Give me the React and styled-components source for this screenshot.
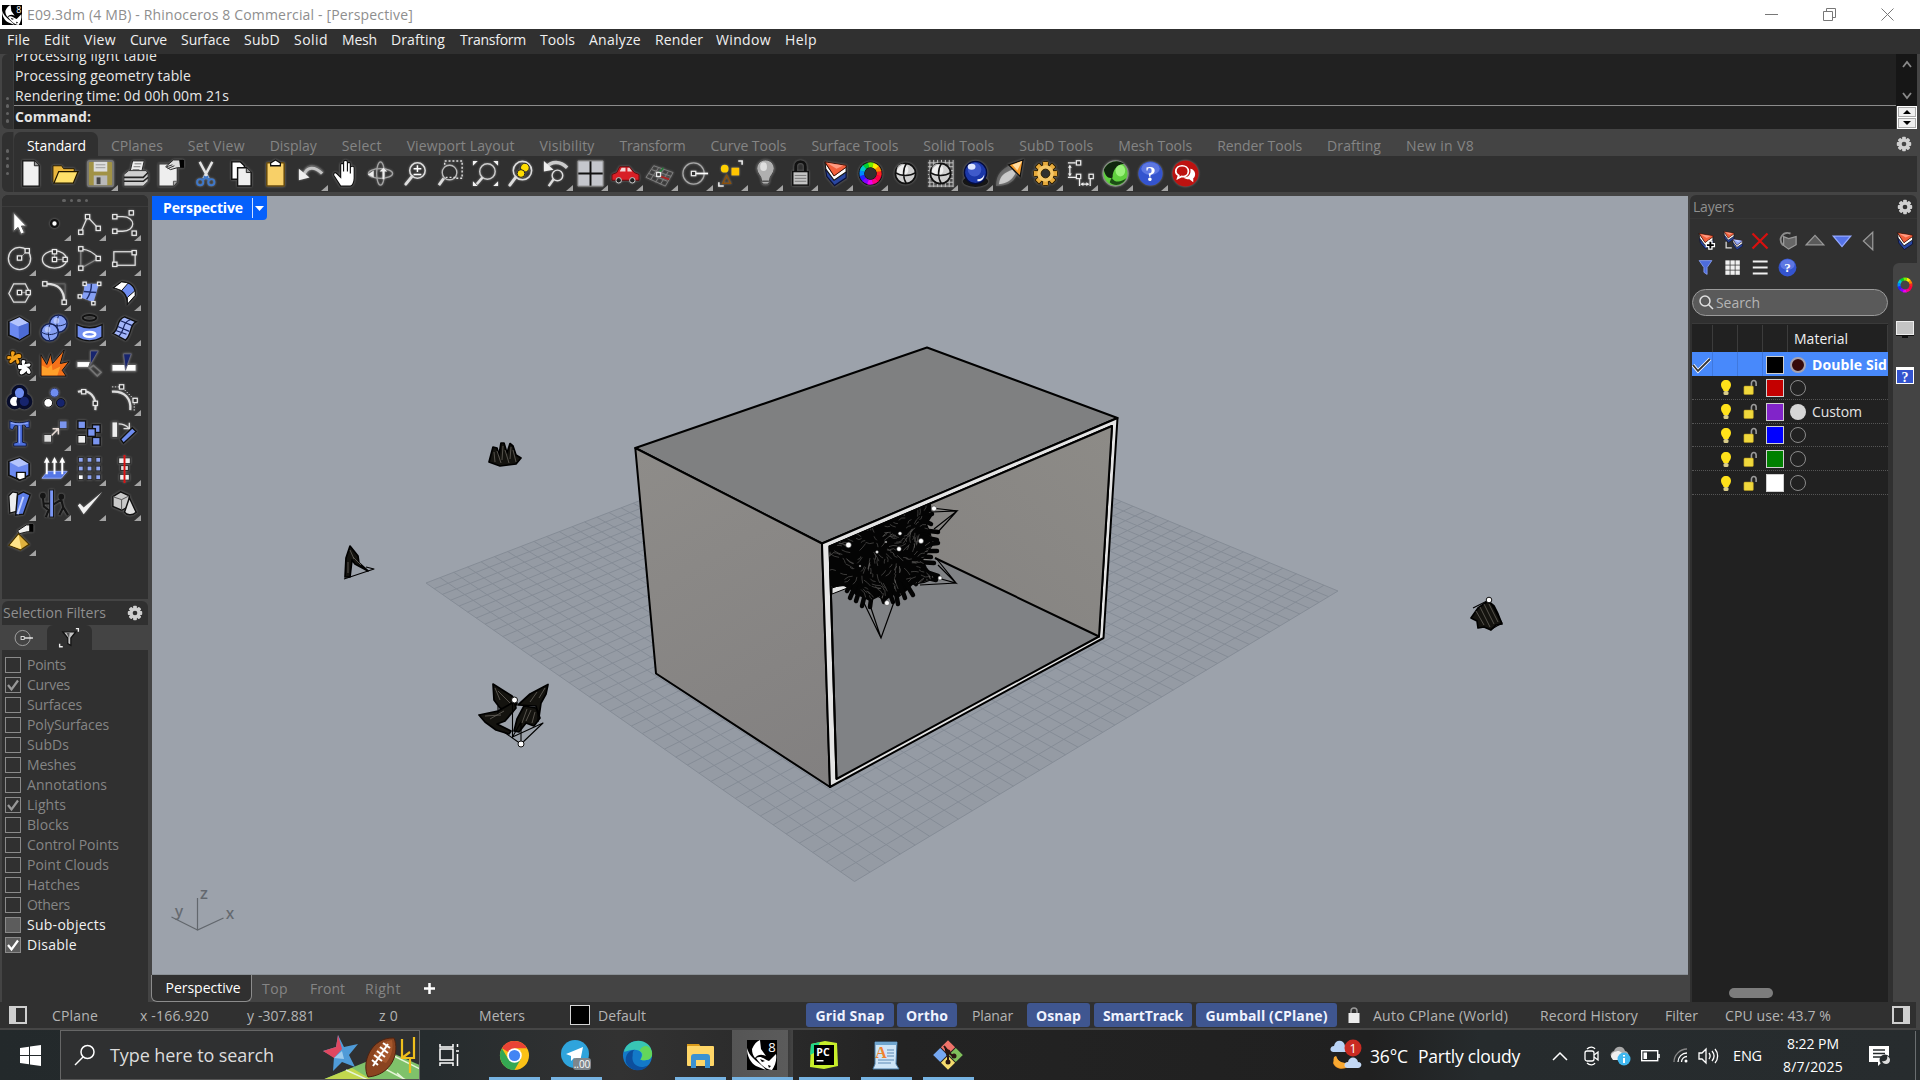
import React, { useLayoutEffect, useRef, useState } from "react";
import styled, { createGlobalStyle } from "styled-components";

const GlobalStyle = createGlobalStyle`
  * { box-sizing: border-box; }
  html, body { margin: 0; padding: 0; overflow: hidden; background: #444; }
  body { font-family: "Open Sans", "Noto Sans", sans-serif; font-size: 14px; color: #e4e4e4; }
  svg { display: block; flex: none; overflow: visible; }
`;

/* ---------- text that is tracked to a known measure ---------- */

const Run = styled.span`
  display: inline-block;
  flex: none;
  white-space: pre;
  line-height: 20px;
  font-size: ${(p) => p.$size || 14}px;
  font-weight: ${(p) => (p.$bold ? 700 : 400)};
  color: ${(p) => p.$color || "inherit"};
  margin-left: ${(p) => p.$ml || 0}px;
`;

function Text({ w, children, ...rest }) {
  const ref = useRef(null);
  const [spacing, setSpacing] = useState(0);
  useLayoutEffect(() => {
    if (!w) return;
    const natural = ref.current.getBoundingClientRect().width;
    setSpacing((w - natural) / Math.max(1, children.length));
  }, []);
  return (
    <Run ref={ref} style={{ letterSpacing: spacing }} {...rest}>
      {children}
    </Run>
  );
}

/* ---------- drawing helpers ---------- */

const Icon = ({ size = 32, children, vb = 32 }) => (
  <svg width={size} height={size} viewBox={`0 0 ${vb} ${vb}`} fill="none">
    {children}
  </svg>
);
const Nd = ({ x, y, s = 4.4 }) => (
  <rect x={x - s / 2} y={y - s / 2} width={s} height={s} fill="#303030" stroke="#e8e8e8" strokeWidth="1.3" />
);
const Lens = () => (
  <>
    <circle cx="18" cy="13" r="8" stroke="#ddd" strokeWidth="1.6" />
    <path d="M12.5 19 6 27" stroke="#ddd" strokeWidth="3" strokeLinecap="round" />
  </>
);
const Arrowed = () => (
  <>
    <path d="M9 19C12 8 20 7 28 16" stroke="#666" strokeWidth="5" />
    <path d="M9 18C12 9 20 8 28 16" stroke="#c4c4c4" strokeWidth="3" />
    <path d="M4 11v12l11-3z" fill="#eee" />
  </>
);
const LayersDrawing = ({ top = "#f2603c", lit = "#ff9a80" }) => (
  <>
    <path d="M5.500 11 14.500 22 27 14v6.500L15 28.500 7 19z" fill="#2946a0" stroke="#0c1238" strokeWidth="1.300" />
    <path d="M5 4 14.500 18 27 9v5.500L14.500 23 6 11.500z" fill="#fff" stroke="#141414" strokeWidth="1.200" />
    <path d="M5 4 27 7.500v2L14.500 18.500z" fill={top} stroke="#3a0d04" strokeWidth=".9" />
    <path d="M7 5l17 2.800L17 11z" fill={lit} />
  </>
);
const Sphere = () => (
  <>
    <circle cx="16" cy="16" r="10.500" fill="#cfcfcf" stroke="#111" strokeWidth="1.800" />
    <circle cx="13" cy="12" r="6" fill="#fff" opacity=".65" />
    <path d="M17 5.500c-4 6-4 15 0 21M5.500 15c6 4 15 4 21 0" stroke="#111" strokeWidth="1.600" />
  </>
);
const hues = ["#f22", "#f80", "#fe0", "#7e0", "#0c3", "#0cc", "#08f", "#22f", "#80f", "#e0e", "#f08", "#f04"];
const ColorWheel = ({ r = 9, w = 5 }) =>
  hues.map((h, i) => {
    const a = (i * Math.PI) / 6 - 0.3;
    const b = a + Math.PI / 6 + 0.05;
    return (
      <path
        key={h}
        d={`M${16 + r * Math.cos(a)} ${16 - r * Math.sin(a)}A${r} ${r} 0 0 0 ${16 + r * Math.cos(b)} ${16 - r * Math.sin(b)}`}
        stroke={h}
        strokeWidth={w}
      />
    );
  });
const Help = ({ r = 12 }) => (
  <>
    <circle cx="16" cy="16" r={r} fill="#3454cf" />
    <ellipse cx="16" cy="11" rx={r - 3} ry={r - 6} fill="#6f86ea" opacity=".7" />
    <text x="16" y="23.5" textAnchor="middle" fontFamily="Liberation Serif, serif" fontWeight="700" fontSize="22" fill="#fff">?</text>
  </>
);
const Gear = ({ size = 18, color = "#cfcfcf", hole = "#303030" }) => (
  <svg width={size} height={size} viewBox="-10 -10 20 20">
    {[0, 45, 90, 135].map((a) => (
      <rect key={a} x="-2.1" y="-8" width="4.2" height="16" rx="1" fill={color} transform={`rotate(${a})`} />
    ))}
    <circle r="5.7" fill={color} />
    <circle r="2.6" fill={hole} />
  </svg>
);
const RhinoHead = ({ size }) => (
  <svg width={size} height={size} viewBox="0 0 30 30">
    <rect width="30" height="30" fill="#000" />
    <path d="M5 9c2-5 5-8 8-9l1 9 5 7c-4-2-8-2-11 2-2-3-3-5-3-9z" fill="#fff" />
    <path d="M9 18c5-3 8 1 13 3l7-7c1 6-1 12-4 16-7-1-12-6-16-12z" fill="#fff" />
    <path d="M0 8c0 9 4 15 9 18l10 4c-4-5-9-8-13-12-3-3-5-6-6-10z" fill="#fff" />
    <path d="M13 19l5 2-3 1zM21 25l3 1-2 2z" fill="#000" />
    <text x="25" y="12" textAnchor="middle" fontFamily="Open Sans, sans-serif" fontSize="13" fill="#fff">8</text>
  </svg>
);

/* ---------- toolbar icons ---------- */

const page = "M8 3h12l5 5v21H8z";
const I = {
  new: <><path d={page} fill="#f1f1f1" stroke="#111" strokeWidth="1.300" /><path d="M20 3v5h5" fill="#999" stroke="#222" /></>,
  open: <><path d="M3 25V8h9l2 3h11v4" fill="#eab63c" stroke="#221800" /><path d="M4 26 9 14h20l-5 12z" fill="#ffe06a" stroke="#221800" strokeWidth="1.3" /></>,
  save: <><rect x="3" y="3" width="26" height="26" rx="2" fill="#a19245" stroke="#777" strokeWidth="2" /><rect x="9" y="4" width="14" height="10" fill="#ddd" /><path d="M11 7h10M11 10h10" stroke="#999" /><rect x="9" y="18" width="14" height="10" fill="#b9b9b9" /><rect x="12" y="20" width="4" height="7" fill="#444" /></>,
  print: <><path d="M10 16 13 3h12l-3 13z" fill="#eee" stroke="#222" /><path d="M15 6h7M14 9h7M13 12h7" stroke="#777" /><path d="M4 17l5-4h18l2 3v8l-5 5H4z" fill="#cfcfcf" stroke="#333" /><path d="M4 20h20l5-5M4 24h20l5-4" stroke="#222" strokeWidth="1.6" /></>,
  props: <><path d="M4 6h19v19l-4 4H4z" fill="#eee" stroke="#333" strokeWidth="1.200" /><path d="M19 29v-5h4" fill="#aaa" stroke="#555" /><path d="M11 9 19 2h10v8h-6l-7 2z" fill="#ddd" stroke="#222" /><path d="M12 9l6-2M13 11l7-3" stroke="#333" /><path d="M25 2h5v8h-4z" fill="#000" /></>,
  cut: <><path d="M10 4l9 17M23 4l-9 17" stroke="#e5e5e5" strokeWidth="2.5" /><circle cx="10.500" cy="25" r="3.2" stroke="#3f78c9" strokeWidth="2" /><circle cx="22" cy="25" r="3.200" stroke="#3f78c9" strokeWidth="2" /><path d="M19 19 12 23M14 19l7 4" stroke="#3f78c9" strokeWidth="2.200" /></>,
  copy: <><path d="M7 4h9l4 4v14H7z" fill="#fff" stroke="#111" strokeWidth="1.5" /><path d="M13 10h9l5 5v14H13z" fill="#eee" stroke="#111" strokeWidth="1.5" /><path d="M22 10v5h5" fill="#999" stroke="#222" /></>,
  paste: <><rect x="7" y="5" width="18" height="24" rx="1" fill="#f8d068" stroke="#654a10" strokeWidth="1.6" /><path d="M11 8V5l5-3 5 3v3z" fill="#fff" stroke="#111" strokeWidth="1.3" /></>,
  undo: <Arrowed />,
  hand: <path d="M11 29 4 18c-1-2 1-4 3-2l4 4V7c0-2 3-2 3 0v7-10c0-2 4-2 4 0v10-8c0-2 3-2 3 0v10-6c0-2 4-2 4 0v11c0 4-2 8-4 8z" fill="#fff" stroke="#111" strokeWidth="1.2" />,
  rotate: <><ellipse cx="16" cy="16" rx="4" ry="12" stroke="#a5a5a5" strokeWidth="1.3" /><ellipse cx="16" cy="16" rx="12.500" ry="5" stroke="#a5a5a5" strokeWidth="1.3" /><path d="M19 10l4 4h-3v8h-2v-8h-3zM9 13l-6 4 6 3z" fill="#eee" /></>,
  zoom: <><Lens /><path d="M14 11h8M18 7.500v7M14 17h8" stroke="#fff" strokeWidth="1.500" /></>,
  zoomWin: <><rect x="10" y="3" width="18" height="18" stroke="#ddd" strokeWidth="1.500" strokeDasharray="2 2" /><circle cx="15" cy="15" r="7.500" stroke="#bbb" strokeWidth="1.400" fill="#303030" /><path d="M9 21 4 28" stroke="#ddd" strokeWidth="2.800" /><path d="M11 20h10" stroke="#ddd" strokeWidth="1.500" strokeDasharray="2 2" /></>,
  zoomExt: <><path d="M3 8V3h5zM29 8V3h-5zM3 24v5h5zM29 24v5h-5z" fill="#f4f4f4" /><circle cx="18" cy="14" r="8" stroke="#ccc" strokeWidth="1.500" /><path d="M13 20 7 27" stroke="#ddd" strokeWidth="2.500" /></>,
  zoomSel: <><circle cx="18" cy="13" r="9.500" stroke="#ddd" strokeWidth="1.600" /><path d="M11 20 5 28" stroke="#ddd" strokeWidth="3" strokeLinecap="round" /><circle cx="20.500" cy="10" r="4.500" fill="#fd0" stroke="#222" /><circle cx="16.500" cy="16" r="4" fill="#fd0" stroke="#222" /></>,
  undoView: <><path d="M7 9C12 3 21 3 28 10" stroke="#ccc" strokeWidth="3.500" /><path d="M4 3v11l10-2z" fill="#eee" /><circle cx="18" cy="18" r="5.500" stroke="#ddd" strokeWidth="1.500" /><path d="M14 22l-5 7" stroke="#ddd" strokeWidth="2.500" /></>,
  views: <><rect x="3" y="3" width="26" height="26" fill="#c4c6cc" /><path d="M3 16h26M16 3v26" stroke="#111" strokeWidth="2" /><path d="M3 3h26v26H3z" stroke="#888" /></>,
  car: <><path d="M2 17l5-2 3-6h10l5 6 5 2v6H2z" fill="#d81f26" stroke="#5d080b" /><path d="M10 14l2-4h4v4zM18 10h2l3 4h-5z" fill="#f2d5d5" /><circle cx="9" cy="23" r="2.800" fill="#222" stroke="#ccc" /><circle cx="23" cy="23" r="2.800" fill="#222" stroke="#ccc" /></>,
  grid: <><path d="M9 8l20 7-8 14L1 20zM7 12l20 7M4 16l19 8M14 10 6 22M19 12l-8 13M24 14l-8 13" stroke="#808080" strokeWidth="1" /><path d="M16 19l9 3" stroke="#a22" strokeWidth="1.800" /><path d="M15 15l4-5" stroke="#237d38" strokeWidth="1.600" /><Nd x={14} y={17} s={4} /></>,
  osnap: <><circle cx="14" cy="16" r="11" stroke="#a8a8a8" strokeWidth="1.300" /><path d="M14 16h15" stroke="#fff" strokeWidth="1.800" /><Nd x={14} y={16} s={4.5} /></>,
  shapes: <><circle cx="10" cy="11" r="4" fill="#ffd000" /><rect x="17" y="10" width="8" height="8" fill="#ffc400" /><path d="M12 18l4 8H8z" stroke="#8a500c" strokeWidth="1.500" /><path d="M24 3h4v4M4 25v4h5" stroke="#eee" strokeWidth="1.600" /></>,
  bulb: <><path d="M16 2c-5 0-9 4-9 9 0 5 5 7 5 13 0 5 8 5 8 0 0-6 5-8 5-13 0-5-4-9-9-9z" fill="#b0b0b0" stroke="#444" /><ellipse cx="14" cy="9" rx="3.500" ry="4.500" fill="#dedede" /><path d="M12.500 24h7M13 27h6" stroke="#555" strokeWidth="1.300" /></>,
  lock: <><path d="M11 15V9c0-7 10-7 10 0v6" stroke="#111" strokeWidth="3" /><rect x="8" y="14" width="16" height="14" fill="#c5c5c5" stroke="#111" strokeWidth="1.500" /><path d="M10 18h12M10 21h12M10 24h12" stroke="#777" /></>,
  layers: <LayersDrawing />,
  wheel: <><circle cx="16" cy="16" r="12.500" fill="#111" /><ColorWheel /><circle cx="16" cy="16" r="6" fill="#303030" /></>,
  sphere: <Sphere />,
  sphereGrid: <><path d="M3 5h26M3 9h26M3 13h26M3 17h26M3 21h26M3 25h26M3 29h26M5 2v28M9 2v28M13 2v28M17 2v28M21 2v28M25 2v28M29 2v28" stroke="#c4c4c4" /><Sphere /></>,
  ball: <><ellipse cx="16" cy="24" rx="13" ry="6" fill="#151515" /><circle cx="16" cy="15" r="11.500" fill="#1b37a8" stroke="#050d3d" strokeWidth="1.500" /><circle cx="15" cy="12" r="7" fill="#4e6ad8" opacity=".7" /><ellipse cx="12" cy="9" rx="4" ry="3" fill="#dfe6ff" /><path d="M18 22c4 0 6-2 7-5 0 5-3 7-7 7z" fill="#fff" /></>,
  spot: <><path d="M1 29c0-12 6-18 16-22l6 9c-2 7-8 13-22 13z" fill="#999" opacity=".4" /><path d="M4 27c1-9 6-12 14-15l3 4c-3 6-8 10-17 11z" fill="#fff" opacity=".6" /><path d="M14 7 29 2l-3 17z" fill="#f59c2d" stroke="#111" strokeWidth="1.300" /><path d="M18 7l10-4-5 10z" fill="#ffdca0" /></>,
  gear: <g transform="translate(16 16)">{[0, 45, 90, 135].map((a) => <rect key={a} x="-3" y="-12.500" width="6" height="25" rx="1" fill="#e8ab3c" stroke="#2a1c00" transform={`rotate(${a})`} />)}<circle r="8.500" fill="#f5c768" /><circle r="4.500" fill="#303030" stroke="#2a1c00" /></g>,
  dims: <><path d="M3 5h8M3 20h10M5 8v9M15 21v8M26 21v8M17 27h7" stroke="#eee" strokeWidth="1.300" /><path d="M5 7l2 3H3zM5 19l-2-3h4zM16 27l3-2v4zM25 27l-3-2v4z" fill="#eee" /><Nd x={14} y={5} /><Nd x={14} y={19} /><Nd x={27} y={19} /></>,
  green: <><circle cx="16" cy="16" r="13" fill="#5fcf3e" stroke="#8a8a8a" strokeWidth="1.200" /><path d="M4 12C8 3 19 1 25 6c-8 1-12 7-12 14-4 2-8-2-9-8z" fill="#10260f" /><path d="M12 20c3 6 10 5 15 1-3 7-12 9-17 4z" fill="#1c4d15" /><ellipse cx="21" cy="13" rx="5" ry="6" fill="#b4ff96" opacity=".7" /></>,
  help: <Help r={12.5} />,
  chat: <><circle cx="16" cy="16" r="13.500" fill="#bd1210" /><path d="M6 14c0-8 13-8 13 0 0 4-4 6-7 5l-4 2 1-3c-2-1-3-2-3-4z" stroke="#fff" strokeWidth="1.800" /><path d="M21 11c6 1 6 8 3 10v4l-4-3c-3 0-5-1-6-2 5 0 8-3 7-9z" fill="#fff" /></>,
};
const bar = "new open save* print props cut copy paste undo* hand rotate zoom zoomWin zoomExt zoomSel undoView* views* car* grid* osnap* shapes* bulb* lock* layers* wheel* sphere sphereGrid* ball* spot* gear* dims* green* help* chat".split(" ");

/* ---------- side palette icons ---------- */

const blue = "#6f8df0";
const L = {
  arrow: <path d="M10 5v19l4.500-4 3 7 3.500-1.600-3-6.800h5z" fill="#fff" stroke="#555" />,
  point: <circle cx="16" cy="16" r="3.500" fill="#fff" stroke="#111" strokeWidth="2.500" />,
  poly: <><path d="M7 25 14 9l11 12" stroke="#ddd" strokeWidth="1.300" /><Nd x={7} y={25} /><Nd x={14} y={9} /><Nd x={25} y={21} /></>,
  curve: <><path d="M6 9h8c14 0 14 15 0 15H6" stroke="#ddd" strokeWidth="1.300" /><Nd x={6} y={9} /><Nd x={23} y={5} /><Nd x={6} y={24} /><Nd x={26} y={26} /></>,
  circle: <><circle cx="16" cy="16" r="11.500" stroke="#ddd" strokeWidth="1.300" /><path d="M16 16l8-8" stroke="#999" /><Nd x={16} y={15.500} /><Nd x={24} y={8} /></>,
  ellipse: <><ellipse cx="16" cy="17" rx="12.500" ry="9" stroke="#ddd" strokeWidth="1.300" /><path d="M16 9v8h11" stroke="#999" /><Nd x={16} y={9} /><Nd x={16} y={17} /><Nd x={27} y={17} /></>,
  arc: <><path d="M25 16 7 26V6" stroke="#888" strokeWidth="1.200" /><path d="M7 6c9 1 15 5 18 10" stroke="#ddd" strokeWidth="1.300" /><Nd x={7} y={6} /><Nd x={25} y={16} /><Nd x={7} y={26} /></>,
  rect: <><rect x="5" y="9" width="22" height="14" stroke="#ddd" strokeWidth="1.300" /><Nd x={26} y={10} /><Nd x={6} y={22} /></>,
  hexagon: <><path d="M10 6h12l5 10-5 9H10L5 16z" stroke="#ddd" strokeWidth="1.300" /><path d="M16 15h10" stroke="#999" /><Nd x={16} y={15} /><Nd x={25} y={15} /></>,
  fillet: <><path d="M7 6h20v19" stroke="#666" /><path d="M8 6c12 0 18 7 18 18" stroke="#ddd" strokeWidth="2.300" /><Nd x={6} y={6} /><Nd x={26} y={25} /></>,
  patch: <><path d="M11 6h15c-3 8-3 11-6 19L7 20c4-5 3-8 4-14z" fill="#86a0f5" /><path d="M18 6c0 7-2 12-5 16M10 14l13 1" stroke="#20306e" strokeWidth="1.500" /><Nd x={11} y={6} s={3.4} /><Nd x={26} y={6} s={3.4} /><Nd x={6} y={19} s={3.4} /><Nd x={20} y={26} s={3.4} /></>,
  surf: <><path d="M5 10 13 4c10 0 15 6 14 14l-8 9c0-9-4-15-14-17z" fill={blue} stroke="#111" strokeWidth="1.500" /><path d="M5 10 13 4l7 1-7 8zM19 20l8-7v5l-8 9z" fill="#fff" stroke="#111" /></>,
  box: <><path d="M16 4l10 6v12l-10 6-11-5V9z" fill="#6c8af0" stroke="#111" strokeWidth="1.800" /><path d="M5.500 9.200 16 4.500l9.500 5.700L15 14z" fill="#b4c4fc" /><path d="M15 14l10.500-4v11.700L15.500 27.500z" fill="#4c6bd4" /></>,
  spheres: <><circle cx="20" cy="11" r="9" fill="#86a0f5" stroke="#142050" strokeWidth="1.600" /><path d="M12 11c5 3 11 3 16 0M20 3c-2 5-2 11 0 16" stroke="#142050" /><circle cx="11" cy="20" r="9" fill="#86a0f5" stroke="#142050" strokeWidth="1.600" /><path d="M3 20c5 3 11 3 16 0M11 12c-2 5-2 11 0 16" stroke="#142050" /><circle cx="18" cy="8" r="3" fill="#c9d5ff" opacity=".7" /><circle cx="9" cy="17" r="3" fill="#c9d5ff" opacity=".7" /></>,
  torus: <><ellipse cx="16" cy="5" rx="7" ry="3" stroke="#111" strokeWidth="2" /><path d="M3 12c8 4 18 4 26 0v13c-8 5-18 5-26 0z" fill={blue} stroke="#111" strokeWidth="1.500" /><ellipse cx="16" cy="22" rx="6" ry="2.500" stroke="#fff" strokeWidth="2.500" /></>,
  mesh: <><path d="M4 21c7-4 3-14 12-17l12 5c-7 3-4 13-11 19z" fill="#a3b6fa" stroke="#111" strokeWidth="1.500" /><path d="M9 14l12 5M12 8l12 5M10 24C17 18 13 10 22 7M7 18l11 4" stroke="#17245f" strokeWidth="1.200" /></>,
  puzzle: <><path d="M3 11c-1-3 1-4 4-3-1-4 0-6 3-5 2 0 2 2 1 4 3-2 6-2 7 0 1 3 0 4-3 4 2 3 2 6-1 6-2 0-2-3-2-4-3 1-3 4-6 3-2-1-1-4 1-5-2 1-4 2-4 0z" fill="#f5a21a" stroke="#2e1b00" strokeWidth="1.200" /><path d="M14 20c-1-3 1-4 4-3-1-4 0-6 3-5 2 0 2 2 1 4 3-1 6-1 6 1 0 3-2 3-3 3 3 2 4 6 2 7s-4-1-4-2c-3 3-5 4-7 2-1-2 0-4 2-5-2 1-4 0-4-2z" fill="#fff" stroke="#111" strokeWidth="1.200" /></>,
  explode: <><path d="M2 29V7l6 10 4-11 2 10L26 2l-4 14 9-2-7 9 4 6z" fill="#f4711a" stroke="#111" /><path d="M3 28V18l6 3 4-4 1 6 8-4-3 9z" fill="#ffa02a" /></>,
  trim: <><path d="M17 3h8l-8 14z" fill="#17246e" stroke="#667" /><path d="M3 14h14l-2 6H3z" fill="#fff" stroke="#555" /><path d="M16 21l4-3 8 7-4 4z" stroke="#777" strokeWidth="1.500" /></>,
  split: <><path d="M3 17h25v7H3z" fill="#fff" stroke="#555" /><path d="M15 6h8l-6 17z" fill="#17246e" stroke="#667" /></>,
  bool: <><circle cx="16" cy="10" r="6.500" fill={blue} stroke="#080d2b" strokeWidth="3.500" /><circle cx="11" cy="19" r="6.500" fill="#fff" stroke="#080d2b" strokeWidth="3.500" /><circle cx="21" cy="19" r="6.500" fill="#16246d" stroke="#080d2b" strokeWidth="3.500" /><circle cx="16" cy="11" r="4.500" fill={blue} /></>,
  dots: <><circle cx="16" cy="10" r="4.500" fill={blue} stroke="#333e70" /><circle cx="9.500" cy="20.500" r="4.500" fill="#fff" stroke="#111" /><circle cx="22.500" cy="20.500" r="4.500" fill="#16246d" stroke="#111" /></>,
  edit: <><path d="M4 9c12-3 20 5 18 19" stroke="#ddd" strokeWidth="2.300" /><Nd x={10} y={9} /><Nd x={22} y={21} /></>,
  edit2: <><path d="M3 9c14-1 20 8 19 19" stroke="#ddd" strokeWidth="2.300" /><path d="M3 4h9M14 5l12 12v12" stroke="#ddd" strokeDasharray="1.500 1.500" /><Nd x={13} y={4} /><Nd x={27} y={18} /></>,
  text: <><path d="M6 3c7 3 13 2 20 0v7h-3l-2-3h-2v18l4 1v3H10v-3l4-1V8h-3l-2 4-3-1z" fill="#4d70de" stroke="#111a40" /><path d="M7 5c7 2 12 2 18 0M16 8v18" stroke="#93a9f7" strokeWidth="1.300" /></>,
  move: <><rect x="21" y="3" width="8" height="8" fill="#7a95ef" stroke="#333" /><rect x="5" y="17" width="8" height="8" fill="#ddd" stroke="#333" /><path d="M13 18l6-6M14 11h6v6" stroke="#e8dcd6" strokeWidth="1.500" /></>,
  copies: <><g fill="#7a95ef" stroke="#111" strokeWidth="1.500"><rect x="4" y="3" width="8" height="8" /><rect x="19" y="7" width="8" height="8" /><rect x="14" y="11" width="8" height="8" /><rect x="19" y="20" width="8" height="8" /></g><rect x="4" y="18" width="8" height="8" fill="#eee" stroke="#111" /></>,
  rotate2: <><rect x="3" y="4" width="6" height="16" fill="#eee" stroke="#333" /><path d="M10 6c5 0 8 2 10 4M21 5v6h-6" stroke="#ddd" strokeWidth="1.400" /><path d="M12 22 24 10l4 4-13 12z" fill={blue} stroke="#111" strokeWidth="1.500" /></>,
  boxEdit: <><path d="M16 5l10 6v12l-10 5-11-5V9z" fill="#6c8af0" stroke="#111" strokeWidth="1.800" /><path d="M5.500 9.200 16 5.500l9.500 5.500L15 14.500z" fill="#b4c4fc" /><path d="M13 20h9v6l-6 2-3-2z" fill="#fff" stroke="#111" strokeWidth="1.500" /></>,
  extrude: <><path d="M3 26l6-7h20l-6 7z" fill="#5677e4" stroke="#8fa5f5" /><path d="M8 22V9M16 22V9M24 22V9" stroke="#fff" strokeWidth="2" /><path d="M8 4l3 6H5zM16 4l3 6h-6zM24 4l3 6h-6z" fill="#fff" /></>,
  array: <>{[0, 1, 2].map((r) => [0, 1, 2].map((c) => <rect key={`${r}${c}`} x={4.5 + c * 9} y={4.500 + r * 9} width="5" height="5" fill={r === 2 && c === 0 ? "#fff" : "#8fa5f2"} stroke="#222" />))}</>,
  align: <><rect x="10" y="5" width="12" height="6" fill="#eee" stroke="#222" /><rect x="12" y="13" width="8" height="5" fill="#ddd" stroke="#222" /><rect x="11" y="22" width="10" height="6" fill="#eee" stroke="#222" /><path d="M16 2v29" stroke="#d11" strokeWidth="2" /></>,
  books: <><path d="M5 8l4-4 5 1-1 19-7 2z" fill="#eee" stroke="#111" strokeWidth="1.300" /><path d="M14 7l6-3 7 3-7 20-8 1z" fill="#5b7ce6" stroke="#111" strokeWidth="1.500" /><path d="M20 9 14 27" stroke="#c7d3ff" strokeWidth="2" /></>,
  people: <><rect x="11" y="2" width="4" height="28" fill="#7b97f5" stroke="#111" /><g stroke="#151515" strokeWidth="2.200"><path d="M4 10l1 9 5 4-3 7M11 16H5M23 12l-8 5M23 12l2 8-4 8M25 20l5 8" /></g><circle cx="4" cy="8" r="3" fill="#151515" /><circle cx="23" cy="9" r="3" fill="#151515" /></>,
  check: <path d="M4 18l6 9L29 4 10 20l-4-4z" fill="#f1f1f1" />,
  solids: <><path d="M4 9l8-5 9 4v11l-8 4-9-4z" fill="#c9c9c9" stroke="#111" strokeWidth="1.500" /><path d="M4 9l9 3 8-4M13 12v11" stroke="#555" /><path d="M21 10l7 15c-4 4-10 3-12 0z" fill="#e0e0e0" stroke="#111" strokeWidth="1.500" /></>,
  pyramid: <><path d="M14 8l9-6h7v7h-6l-8 2z" fill="#eee" stroke="#111" /><path d="M26 1h4v8h-4z" fill="#000" /><path d="M15 11l11 11-9 6-12-5z" fill="#e0b23e" stroke="#463200" strokeWidth="1.300" /><path d="M15 12 18 27 6 23z" fill="#ffe489" /></>,
};
const palette = "arrow point* poly* curve* circle* ellipse* arc* rect* hexagon* fillet* patch* surf* box* spheres* torus* mesh* puzzle* explode trim split bool* dots edit edit2* text move* copies rotate2 boxEdit* extrude* array* align* books* people* check* solids* pyramid*".split(" ");

/* ---------- chrome ---------- */

const Window = styled.div`
  width: 1920px; height: 1080px; display: flex; flex-direction: column; background: #444;
`;
const TitleBar = styled.header`
  height: 29px; background: #fff; display: flex; align-items: center; padding-left: 2px; gap: 5px;
`;
const WindowButtons = styled.div`
  display: flex; align-items: center; gap: 45px; margin-left: auto; padding: 0 26px 1px 0;
`;
const MenuBar = styled.nav`
  height: 25px; background: #303030; display: flex; align-items: center; padding: 0 0 4px 7px; color: #f0f0f0; gap: 14px;
`;
const CommandArea = styled.section`
  height: 75px; display: flex; padding: 0 3px 0 2px;
`;
const Handle = styled.div`
  width: ${(p) => (p.$row ? "100%" : "12px")};
  height: ${(p) => (p.$row ? "12px" : "auto")};
  background: #303030; display: flex; flex-direction: ${(p) => (p.$row ? "row" : "column")};
  align-items: center; justify-content: center; gap: 4px;
  padding-top: ${(p) => p.$top || 0}px;
  border-radius: ${(p) => (p.$row ? "6px 6px 0 0" : "6px 0 0 6px")};
  ${(p) => (p.$row ? "border-bottom: 1px solid #3b3b3b;" : "border-right: 1px solid #3b3b3b;")}
`;
const Dot = styled.i`
  width: 3.500px; height: 3.500px; border-radius: 50%; background: #636363;
`;
const Handles = (p) => (
  <Handle {...p}><Dot /><Dot /><Dot /><Dot /></Handle>
);
const CommandBody = styled.div` flex: 1; background: #212121; display: flex; flex-direction: column; `;
const History = styled.div`
  height: 52px; overflow: hidden; display: flex; flex-direction: column; align-items: flex-start; justify-content: flex-end; padding-left: 1px;
  border-bottom: 1px solid #8c8c8c; color: #e8e8e8;
  ${Run}:last-child { margin-bottom: -1px; }
`;
const Prompt = styled.div` flex: 1; display: flex; align-items: center; padding: 0 0 2px 1px; `;
const CommandSide = styled.div` width: 21px; display: flex; flex-direction: column; `;
const Scroller = styled.div`
  height: 52px; background: #161616; display: flex; flex-direction: column; align-items: center; justify-content: space-between; padding: 5px 0 5px;
`;
const Spinner = styled.div`
  flex: 1; background: #fff; display: flex; flex-direction: column; gap: 1px; padding: 1px; margin-left: 1px;
`;
const SpinButton = styled.div`
  flex: 1; border: 1px solid #aaa; background: #efefef; display: flex; align-items: center; justify-content: center;
`;
const ToolbarArea = styled.section` height: 63px; display: flex; padding: 3px 3px 0 2px; `;
const ToolbarBody = styled.div` flex: 1; display: flex; flex-direction: column; `;
const TabRow = styled.div` height: 24px; display: flex; align-items: center; `;
const Tab = styled.div`
  height: 24px; display: flex; align-items: center; justify-content: center; padding: 3px 12px 0 12.950px;
  color: ${(p) => (p.$active ? "#fff" : "#858585")};
  background: ${(p) => (p.$active ? "#303030" : "transparent")};
  border-radius: 7px 7px 0 0;
`;
const TabGear = styled.div` margin-left: auto; padding-right: 4px; `;
const IconRow = styled.div` height: 36px; background: #303030; display: flex; `;
const ToolCell = styled.div`
  position: relative; width: 35px; height: 35px; display: flex; align-items: center; justify-content: center; flex: none;
  padding: 0 ${(p) => p.$shift || 0}px ${(p) => p.$lift || 0}px 0;
  svg { filter: drop-shadow(0 0 .8px #7a7a7a); }
`;
const Corner = styled.i`
  position: absolute; right: 1px; bottom: 0; width: 7px; height: 6px; background: #a3a3a3;
  clip-path: polygon(100% 0, 100% 100%, 0 100%);
`;
const Main = styled.main` height: 810px; padding-top: 3px; display: flex; `;

/* left column */
const LeftColumn = styled.aside` width: 152px; padding-left: 2px; display: flex; flex-direction: column; `;
const Palette = styled.div` width: 146px; height: 404px; background: #303030; border-radius: 6px 6px 0 0; `;
const PaletteGrid = styled.div` display: grid; grid-template-columns: repeat(4, 35px); padding: 0; margin-top: -1px; `;
const FilterPanel = styled.div` width: 146px; flex: 1; margin-top: 2px; background: #303030; border-radius: 6px 6px 0 0; `;
const PanelHead = styled.div` height: 24px; display: flex; align-items: center; justify-content: space-between; padding: 0 4px 0 1px; color: #8f8f8f; `;
const FilterTabs = styled.div` height: 25px; background: #444; display: flex; width: 150px; `;
const FilterTab = styled.div`
  width: 45px; display: flex; justify-content: center; align-items: center; padding-right: ${(p) => (p.$active ? 2 : 1)}px;
  background: ${(p) => (p.$active ? "#303030" : "transparent")}; border-radius: 6px 6px 0 0;
`;
const FilterList = styled.div` padding: 5px 0 0 3px; display: flex; flex-direction: column; `;
const FilterRow = styled.label` height: 20px; display: flex; align-items: center; gap: 6px; color: ${(p) => (p.$on ? "#f2f2f2" : "#858585")}; `;
const Box = styled.span`
  width: 16px; height: 16px; border: 1px solid #8a8a8a; display: flex; align-items: center; justify-content: center;
  background: ${(p) => (p.$on ? "#5c5c5c" : "transparent")};
`;

/* viewport */
const Center = styled.section` width: 1536px; display: flex; flex-direction: column; `;
const Viewport = styled.div`
  position: relative; height: 779px; margin-top: 1px; background: #9ca2ab; border-bottom: 1px solid #8a9096;
`;
const ViewTitle = styled.div`
  position: absolute; left: 0; top: 0; width: 115px; height: 24px; background: #0560fb; border-radius: 0 0 4px 0;
  display: flex; align-items: center; padding-left: 11px; color: #fff;
`;
const TitleDrop = styled.span`
  margin-left: 9px; height: 20px; border-left: 1px solid #cfe0ff; display: flex; align-items: center; padding-left: 2px;
`;
const ViewTabs = styled.div` height: 27px; display: flex; align-items: center; color: #858585; `;
const ViewTab = styled.div`
  height: 27px; width: 101px; display: flex; align-items: center; justify-content: center; background: #303030; color: #fff;
  border: 1px solid #8c8c8c; border-top: 0; border-radius: 0 0 6px 6px; padding-left: 3px; margin-left: -1px;
`;

/* right column */
const RightColumn = styled.aside` width: 232px; padding: 0 3px 0 2px; display: flex; flex-direction: column; `;
const LayersHead = styled.div` height: 24px; background: #303030; border-radius: 6px 6px 0 0; display: flex; align-items: center; justify-content: space-between; padding: 0 3px; color: #8f8f8f; border-bottom: 1px solid #363636; `;
const LayersBody = styled.div` flex: 1; display: flex; background: #303030; `;
const LayersContent = styled.div` width: 203px; padding: 8px 5px 0 2px; display: flex; flex-direction: column; `;
const LayerTools = styled.div` height: 27px; display: flex; `;
const LayerTool = styled.div` width: 27.300px; display: flex; justify-content: center; align-items: center; flex: none; `;
const Search = styled.div`
  height: 27px; margin-top: 8px; border-radius: 14px; background: #5a5a5a; border: 1px solid #9a9a9a;
  display: flex; align-items: center; padding-left: 6px; gap: 2px; color: #b5b5b5;
`;
const Table = styled.div` flex: 1; margin-top: 7px; background: #212121; overflow: hidden; display: flex; flex-direction: column; `;
const HeadRow = styled.div`
  height: 29px; display: grid; grid-template-columns: 21px 25px 25px 25px 1fr; border-top: 1px solid #3a3a3a; padding-top: 1px;
`;
const HeadCell = styled.div` border-right: 1px solid #3c3c3c; display: flex; align-items: center; padding-left: 6px; color: #f0f0f0; `;
const LayerRow = styled.div`
  height: ${(p) => (p.$sel ? 24 : 23.800)}px; display: grid; grid-template-columns: 21px 25px 25px 25px 1fr;
  background: ${(p) => (p.$sel ? "#4889fb" : "transparent")};
  border-bottom: ${(p) => (p.$sel ? "0" : "1px dotted #555")};
`;
const Cell = styled.div`
  display: flex; align-items: center; justify-content: ${(p) => (p.$start ? "flex-start" : "center")}; gap: 6px;
  padding: 1px 0 0 ${(p) => (p.$start ? 2 : 0)}px; overflow: hidden;
  ${(p) => p.$line && "border-right: 1px solid #3f78dd;"}
`;
const Swatch = styled.span` width: 18px; height: 18px; margin-right: 1px; border: 1px solid #cfcfcf; background: ${(p) => p.$c}; `;
const Material = styled.span`
  width: 16px; height: 16px; border-radius: 50%; flex: none; background: ${(p) => p.$c || "transparent"};
  border: ${(p) => (p.$c === "#d6d6d6" ? 0 : p.$c ? 2 : 1)}px solid ${(p) => (p.$c ? "#a9a3ad" : "#8a8a8a")};
`;
const ScrollThumb = styled.div` width: 44px; height: 10px; border-radius: 5px; background: #7d7d7d; margin: auto 0 4px 37px; `;
const SideTabs = styled.div` width: 24px; display: flex; flex-direction: column; `;
const SideActive = styled.div` height: 44px; background: #303030; display: flex; justify-content: center; align-items: center; border-radius: 0 0 6px 0; `;
const SideRest = styled.div` flex: 1; background: #444; border-radius: 6px 0 0 0; padding-top: 10px; display: flex; flex-direction: column; align-items: center; gap: 24px; `;

/* status bar */
const StatusBar = styled.footer`
  height: 28px; background: #303030; border-bottom: 2px solid #464646; display: flex; align-items: center; color: #b4b4b4; padding-left: 9px; width: 1916px;
  ${Run} { padding-top: 1.500px; }
`;
const Pill = styled.div`
  width: ${(p) => p.$w}px; height: 24px; margin-left: ${(p) => p.$ml || 0}px; background: #3f5690; border-radius: 3px; color: #f0f3ff;
  display: flex; align-items: center; justify-content: center; flex: none;
`;
const ColorBox = styled.span` width: 20px; height: 20px; background: #000; border: 1px solid #d5d5d5; margin-left: 45px; `;
const Spacer = styled.i` width: ${(p) => p.$w}px; flex: none; `;

/* taskbar */
const Taskbar = styled.footer`
  height: 50px; display: flex; color: #fff;
  background: linear-gradient(90deg, #23292b 0, #262c2e 430px, #323232 620px, #2c2c2c 740px, #232323 900px, #202020 1370px, #262b2d 1480px, #272c2e 1920px);
`;
const Start = styled.div` width: 60px; display: flex; align-items: center; justify-content: center; `;
const TaskSearch = styled.div`
  width: 360px; background: #2f3031; border: 1px solid #666; border-bottom-color: #555; display: flex; align-items: center; padding-left: 13px; color: #dcdcdc; overflow: hidden;
`;
const TaskApp = styled.div`
  width: ${(p) => p.$w || 51}px; margin-left: ${(p) => p.$ml || 0}px; display: flex; align-items: center; justify-content: center; flex: none;
  background: ${(p) => (p.$active ? "linear-gradient(90deg,#555 0,#5b5b5b 92%,#3b3b3b 92%,#444)" : "transparent")};
  border-bottom: 3px solid ${(p) => (p.$open ? "#76b3e2" : "transparent")};
  padding: 3px 1px 0 0;
`;
const Clock = styled.div` width: 60px; display: flex; flex-direction: column; align-items: center; justify-content: center; gap: 3px; margin-left: 21px; `;

/* ---------- scene ---------- */

// Projects the unit square onto the ground plane's four visible corners.
const B = [854.500, 881.500], R = [1338, 591], T = [888, 405], Lf = [426, 583];
function ground(u, v) {
  const dx1 = R[0] - T[0], dx2 = Lf[0] - T[0], dx3 = B[0] - R[0] + T[0] - Lf[0];
  const dy1 = R[1] - T[1], dy2 = Lf[1] - T[1], dy3 = B[1] - R[1] + T[1] - Lf[1];
  const d = dx1 * dy2 - dx2 * dy1;
  const g = (dx3 * dy2 - dx2 * dy3) / d, h = (dx1 * dy3 - dx3 * dy1) / d;
  const k = g * u + h * v + 1;
  return [
    ((R[0] - B[0] + g * R[0]) * u + (Lf[0] - B[0] + h * Lf[0]) * v + B[0]) / k,
    ((R[1] - B[1] + g * R[1]) * u + (Lf[1] - B[1] + h * Lf[1]) * v + B[1]) / k,
  ];
}
const seg = (a, b) => `M${a[0].toFixed(1)} ${a[1].toFixed(1)}L${b[0].toFixed(1)} ${b[1].toFixed(1)}`;
const N = 40;
const gridPath = Array.from({ length: N + 1 }, (_, i) => seg(ground(i / N, 0), ground(i / N, 1)) + seg(ground(0, i / N), ground(1, i / N))).join("");

// Short wavy hairs that run outward from the middle of the tangle.
let seed = 11;
const rnd = () => ((seed = (seed * 16807) % 2147483647) / 2147483647);
const strands = Array.from({ length: 300 }, () => {
  const x = 830 + rnd() * 112, y = 508 + rnd() * 100;
  const a = Math.atan2(y - 550, x - 876) + Math.sin(x / 7) * 0.9 + Math.cos(y / 6) * 0.7;
  const l = 4 + rnd() * 6, c = Math.cos(a), s = Math.sin(a), bend = (rnd() - 0.5) * 5;
  return `M${x.toFixed(1)} ${y.toFixed(1)}q${(c * l * 0.5 - s * bend).toFixed(1)} ${(s * l * 0.5 + c * bend).toFixed(1)} ${(c * l).toFixed(1)} ${(s * l).toFixed(1)}`;
}).join("");
const fringe = [
  [925, 512, 932, 514], [922, 520, 931, 524], [920, 530, 938, 532], [918, 536, 937, 540], [920, 545, 938, 543], [918, 551, 937, 551],
  [915, 556, 931, 557], [918, 562, 934, 563], [920, 570, 938, 576], [916, 575, 936, 580], [908, 575, 916, 584], [905, 582, 913, 595],
  [900, 584, 905, 598], [895, 588, 898, 604], [888, 588, 893, 602], [880, 590, 884, 602], [872, 592, 870, 607], [866, 590, 862, 606],
  [860, 588, 856, 601], [856, 584, 850, 598], [852, 582, 847, 591],
].map(([a, b, c, d]) => `M${a} ${b}L${c} ${d}`).join("");
const blob = "M829 546 930 504 931 516 926 524 930 534 932 545 926 554 922 560 926 568 934 578 924 582 912 584 906 590 899 596 892 594 885 600 878 596 870 600 862 596 856 594 850 588 844 585 829 587z";

const Scene = () => (
  <svg width="1536" height="778" viewBox="152 196 1536 778" fill="none">
    <defs>
      <linearGradient id="side" x1="640" y1="450" x2="830" y2="780" gradientUnits="userSpaceOnUse"><stop stopColor="#8e8c89" /><stop offset="1" stopColor="#828080" /></linearGradient>
      <linearGradient id="wall" x1="1110" y1="430" x2="950" y2="600" gradientUnits="userSpaceOnUse"><stop stopColor="#8d8b87" /><stop offset="1" stopColor="#868482" /></linearGradient>
      <clipPath id="blobClip"><path d={blob} /></clipPath>
      <clipPath id="opening"><path d="M829 546 1112 425.500 1099 637 836 780z" /></clipPath>
    </defs>
    <path d={`M${B}L${R}L${T}L${Lf}Z`} fill="#959ba4" />
    <path d={gridPath} stroke="#858c96" strokeWidth="1" />
    <g stroke="#000" strokeWidth="2" strokeLinejoin="round">
      <path d="M635.300 448 927 347.500 1117.500 418 822 543.500z" fill="#7f8081" />
      <path d="M635.300 448 822 543.500 830 787 656 673.500z" fill="url(#side)" />
      <path d="M822 543.500 1117.500 418 1103.500 638 830 787z" fill="#e4e4e4" />
      <path d="M829.500 546.500 1112 426 1099 636.500 836.500 779z" fill="#808285" />
      <path d="M829.500 546.500 1112 426 1099 636.500 935 558 832 592z" fill="url(#wall)" stroke="none" />
      <path d="M935 558 1099 636.500 1112 426 829.500 546.500 836.500 779" />
      <path d="M832 588l18-6 0 5-18 7z" fill="#e4e4e4" strokeWidth="1" />
    </g>
    <g clipPath="url(#opening)">
      <path d={blob} fill="#040404" stroke="#040404" strokeWidth="2" strokeLinejoin="round" />
      <path d={fringe} stroke="#040404" strokeWidth="4.500" strokeLinecap="round" />
      <path d={strands} stroke="#6a6866" strokeWidth=".55" clipPath="url(#blobClip)" />
    </g>
    <g stroke="#000" strokeWidth="1.200">
      <path d="M932 508l25 3-20 22M932 512l25-1-23 18M936 558l20 25-36 2M938 565l18 18-22-6M864 603l17 35 13-36M871 608l10 30" />
    </g>
    <g fill="#fff" stroke="#333" strokeWidth=".5">
      <circle cx="934" cy="508.500" r="2.500" /><circle cx="848.500" cy="545" r="2.800" /><circle cx="921" cy="541" r="2.500" />
      <circle cx="900" cy="533.500" r="1.800" /><circle cx="899" cy="549" r="2.300" /><circle cx="877" cy="552" r="1.500" />
      <circle cx="940" cy="578" r="2" /><circle cx="887" cy="603" r="2.500" /><circle cx="886" cy="542" r="1" /><circle cx="860" cy="566" r="1" />
    </g>
    <g stroke="#000" strokeWidth="1.700" fill="#14130f" strokeLinejoin="round">
      <path d="M489 462 493 447 497 448 499 455 501 443 504 443 507 453 510 443.500 513 446 516 455 521 458 516 464 500 466z" />
      <path d="M345 577 346 558 350 546 358 556 359 563 368 571 355 564 352 560 350 577z" />
      <path d="M344 579 374 569 366 567" strokeWidth="1.100" fill="none" />
      <path d="M493 684 512 696 517 703 512 713 500 708 494 700z" />
      <path d="M479 715 498 711 514 702 516 708 505 721 497 724 511 731 509 734 496 730 485 722z" />
      <path d="M548 684.500 546 694 541 703 539 717 536 706 518 705 530 694z" />
      <path d="M524 706 536 708 540 718 534 726 526 723 519 732 514 731 517 719z" />
      <path d="M512.500 702V737L543 723 521 744 504 732M512.500 737 521 722V744M498 706v10M538 710v12" strokeWidth="1.100" fill="none" />
      <path d="M1471 618 1478 608 1488 601 1494 606 1498 614 1502 624 1496 625 1491 630 1484 627 1478 628 1477 621z" />
      <path d="M1489 600 1502 623 1490 630M1473 608 1487 601" strokeWidth="1.100" fill="none" />
    </g>
    <path d="M494 452l1 10M497 451l4 12M503 446l-1 14M505 450l4 13M511 447l-1 12M513 450l3 12M350 550l4 9M348 562l0 11M353 557l8 8M495 688l5 12M498 691l12 12M545 688l-6 10M537 692l-7 10M485 716l16-1M490 719l14-8M527 709l-5 14M531 710l-5 11M535 712l-3 11M1476 611l8 14M1480 607l10 20M1484 604l10 20M1489 604l9 18" stroke="#67635d" strokeWidth=".8" />
    <g fill="#fff" stroke="#111"><circle cx="514.500" cy="700" r="3" /><circle cx="521" cy="744" r="3" /><circle cx="1489" cy="600" r="2.800" /></g>
    <path d="M197.500 898v32l26-12M197.500 930l-26-13" stroke="#62676d" strokeWidth="1.200" />
    <g fontFamily="Liberation Sans, Arial, sans-serif" fontSize="16" fill="#62676d" stroke="#62676d" strokeWidth=".2"><text x="226" y="919">x</text><text x="175" y="917">y</text><text x="200" y="899">z</text></g>
  </svg>
);

/* ---------- data ---------- */

const menus = [["File", 23, 0], ["Edit", 26, 44], ["View", 32, 84], ["Curve", 37, 130], ["Surface", 49, 181], ["SubD", 36, 244], ["Solid", 34, 294], ["Mesh", 35, 342], ["Drafting", 54, 391], ["Transform", 66, 460], ["Tools", 35, 540], ["Analyze", 52, 589], ["Render", 48, 655], ["Window", 55, 716], ["Help", 32, 785]];
const tabs = [["Standard", 59], ["CPlanes", 52], ["Set View", 57], ["Display", 47], ["Select", 40], ["Viewport Layout", 108], ["Visibility", 55], ["Transform", 66], ["Curve Tools", 76], ["Surface Tools", 87], ["Solid Tools", 71], ["SubD Tools", 74], ["Mesh Tools", 74], ["Render Tools", 85], ["Drafting", 54], ["New in V8", 68]];
const filters = [["Points", 39], ["Curves", 43, 1], ["Surfaces", 55], ["PolySurfaces", 82], ["SubDs", 42], ["Meshes", 49], ["Annotations", 80], ["Lights", 39, 1], ["Blocks", 42], ["Control Points", 92], ["Point Clouds", 82], ["Hatches", 53], ["Others", 43], ["Sub-objects", 79, 0, 1], ["Disable", 50, 1, 1]];
const layers = [["#c40000"], ["#8124c9", "#d6d6d6", "Custom"], ["#0000ff"], ["#008000"], ["#ffffff"]];

const SmallBulb = () => <svg width="12" height="17" viewBox="0 0 12 17"><path d="M6 1C3 1 1 3 1 6s2.500 4 2.500 6h5c0-2 2.500-3 2.500-6S9 1 6 1z" fill="#ffe11a" /><rect x="3.500" y="12" width="5" height="4" rx="1.500" fill="#d9cc8a" /></svg>;
const SmallLock = () => <svg width="15" height="17" viewBox="0 0 16 17" fill="none"><path d="M9 8V4c0-4 5-4 5 0v3" stroke="#9a9a9a" strokeWidth="1.700" /><rect x="1" y="7" width="10" height="9" rx="1" fill="#f0d83c" stroke="#b89a20" strokeWidth=".6" /></svg>;
const Check = ({ c }) => <svg width="14" height="14" viewBox="0 0 14 14" fill="none"><path d="M2 7l3.500 4.500L12 2.500" stroke={c} strokeWidth="2.200" /></svg>;
const Funnel = () => <><path d="M6 6h21l-8 10v12l-5-3v-9z" fill="#c4c4c4" stroke="#111" strokeWidth="2" /><path d="M12 8h5l-1 8z" fill="#555" /><path d="M27 1h4v5M1 25v5h5" stroke="#eee" strokeWidth="2.200" /></>;

const layerIcons1 = [
  <g key="a"><LayersDrawing /><path d="M23 15v15M15.500 22.500h15" stroke="#fff" strokeWidth="7" /><path d="M23 17v11M17.500 22.500h11" stroke="#000" strokeWidth="3" /></g>,
  <g key="b"><g transform="translate(-2 -2) scale(.72)"><LayersDrawing /></g><g transform="translate(12 10) scale(.7)"><LayersDrawing top="#8ea3f4" lit="#c5d0ff" /></g><path d="M5 17v10h9" stroke="#ddd" strokeWidth="2" /></g>,
  <path key="c" d="M4 4 28 28M28 4 4 28" stroke="#d8100f" strokeWidth="3.500" />,
  <g key="d"><path d="M8 23C-1 12 8 0 20 4" stroke="#8c8c8c" strokeWidth="3" /><path d="M9 9l8 3 12-3v13l-12 7-8-6z" fill="#666" stroke="#999" strokeWidth="2" /></g>,
  <path key="e" d="M2 22 16 7l14 15z" fill="#5a5a5a" stroke="#999" strokeWidth="2" />,
  <path key="f" d="M2 8h28L16 25z" fill="#5573e8" stroke="#93a8ff" strokeWidth="2" />,
  <path key="g" d="M22 2v28L7 16z" fill="#444" stroke="#999" strokeWidth="2" />,
];
const layerIcons2 = [
  <path key="a" d="M4 3h24l-9 13v13l-6-4v-9z" fill="#4d6cdc" stroke="#8da3f5" strokeWidth="1.500" />,
  <g key="b" fill="#f0f0f0">{[4, 12.500, 21].map((x) => [4, 12.500, 21].map((y) => <rect key={`${x}${y}`} x={x} y={y} width="7.300" height="7.300" />))}</g>,
  <path key="c" d="M3 6h25M3 16h25M3 26h25" stroke="#f0f0f0" strokeWidth="3.500" />,
  <Help key="d" r={15} />,
];

const Menu = () => (
  <MenuBar>
    {menus.map(([m, w, x], i) => {
      const prev = menus[i - 1];
      const gap = prev ? x - ((prev[2] || 7) + prev[1]) - 14 : 0;
      return <Text key={m} w={w} $ml={gap}>{m}</Text>;
    })}
  </MenuBar>
);

const Cells = ({ names, set, shift, lift }) =>
  names.map((n) => {
    const key = n.replace("*", "");
    return (
      <ToolCell key={key} $shift={shift} $lift={lift}>
        <Icon size={31}>{set[key]}</Icon>
        {n.endsWith("*") && <Corner />}
      </ToolCell>
    );
  });

export default function App() {
  return (
    <Window>
      <GlobalStyle />
      <TitleBar>
        <RhinoHead size={20} />
        <Text w={386} $color="#8e8e8e">E09.3dm (4 MB) - Rhinoceros 8 Commercial - [Perspective]</Text>
        <WindowButtons>
          <svg width="13" height="13"><path d="M0 6.500h13" stroke="#777" /></svg>
          <svg width="13" height="13" fill="none" stroke="#777"><path d="M.5 3.500h9v9h-9zM3.500 3V.5h9v9H10" /></svg>
          <svg width="13" height="13" stroke="#777"><path d="M.5.5l12 12M12.500.5l-12 12" /></svg>
        </WindowButtons>
      </TitleBar>
      <Menu />
      <CommandArea>
        <Handles $top={36} />
        <CommandBody>
          <History>
            <Text w={142}>Processing light table</Text>
            <Text w={176}>Processing geometry table</Text>
            <Text w={214}>Rendering time: 0d 00h 00m 21s</Text>
          </History>
          <Prompt><Text w={76} $bold>Command:</Text></Prompt>
        </CommandBody>
        <CommandSide>
          <Scroller>
            <svg width="10" height="12" fill="none" stroke="#8a8a8a" strokeWidth="1.800"><path d="M1 8l4-5 4 5" /></svg>
            <svg width="10" height="12" fill="none" stroke="#8a8a8a" strokeWidth="1.800"><path d="M1 4l4 5 4-5" /></svg>
          </Scroller>
          <Spinner>
            <SpinButton><svg width="8" height="4"><path d="M0 4h8L4 0z" fill="#000" /></svg></SpinButton>
            <SpinButton><svg width="8" height="4"><path d="M0 0h8L4 4z" fill="#000" /></svg></SpinButton>
          </Spinner>
        </CommandSide>
      </CommandArea>
      <ToolbarArea>
        <Handles $top={0} />
        <ToolbarBody>
          <TabRow>
            {tabs.map(([t, w], i) => (
              <Tab key={t} $active={i === 0}><Text w={w}>{t}</Text></Tab>
            ))}
            <TabGear><Gear hole="#444" /></TabGear>
          </TabRow>
          <IconRow><Cells names={bar} set={I} shift={3} lift={1} /></IconRow>
        </ToolbarBody>
      </ToolbarArea>
      <Main>
        <LeftColumn>
          <Palette>
            <Handles $row />
            <PaletteGrid><Cells names={palette} set={L} shift={1} /></PaletteGrid>
          </Palette>
          <FilterPanel>
            <PanelHead><Text w={103}>Selection Filters</Text><Gear size={18} /></PanelHead>
            <FilterTabs>
              <FilterTab><Icon size={22}>{I.osnap}</Icon></FilterTab>
              <FilterTab $active><Icon size={20}><Funnel /></Icon></FilterTab>
            </FilterTabs>
            <FilterList>
              {filters.map(([f, w, c, on]) => (
                <FilterRow key={f} $on={on}>
                  <Box $on={on}>{c ? <Check c={on ? "#fff" : "#999"} /> : null}</Box>
                  <Text w={w}>{f}</Text>
                </FilterRow>
              ))}
            </FilterList>
          </FilterPanel>
        </LeftColumn>
        <Center>
          <Viewport>
            <Scene />
            <ViewTitle>
              <Text w={80} $bold>Perspective</Text>
              <TitleDrop><svg width="9" height="5"><path d="M0 0h9L4.500 5z" fill="#fff" /></svg></TitleDrop>
            </ViewTitle>
          </Viewport>
          <ViewTabs>
            <ViewTab><Text w={75}>Perspective</Text></ViewTab>
            <Text w={26} $ml={10}>Top</Text>
            <Text w={35} $ml={22}>Front</Text>
            <Text w={36} $ml={20}>Right</Text>
            <Spacer $w={23} />
            <svg width="11" height="11" stroke="#fff" strokeWidth="2.500"><path d="M5.500 0v11M0 5.500h11" /></svg>
          </ViewTabs>
        </Center>
        <RightColumn>
          <LayersHead><Text w={41}>Layers</Text><Gear /></LayersHead>
          <LayersBody>
            <LayersContent>
              <LayerTools>{layerIcons1.map((g, i) => <LayerTool key={i}><Icon size={20}>{g}</Icon></LayerTool>)}</LayerTools>
              <LayerTools>{layerIcons2.map((g, i) => <LayerTool key={i}><Icon size={i === 0 ? 17 : 19}>{g}</Icon></LayerTool>)}</LayerTools>
              <Search>
                <svg width="15" height="15" fill="none" stroke="#e0e0e0" strokeWidth="1.500"><circle cx="6" cy="6" r="5" /><path d="M9.500 9.500 14 14" /></svg>
                <Text w={44}>Search</Text>
              </Search>
              <Table>
                <HeadRow><HeadCell /><HeadCell /><HeadCell /><HeadCell /><HeadCell><Text w={54}>Material</Text></HeadCell></HeadRow>
                <LayerRow $sel>
                  <Cell $line><svg width="20" height="16" viewBox="0 0 20 16" fill="none"><path d="M1 8l5 6L18 2" stroke="#fff" strokeWidth="3.500" /><path d="M1 8l5 6L18 2" stroke="#333" strokeWidth="1.800" /></svg></Cell>
                  <Cell $line /><Cell $line /><Cell><Swatch $c="#000" /></Cell>
                  <Cell $start><Material $c="#360a0a" /><Text w={75} $bold $color="#fff">Double Sid</Text></Cell>
                </LayerRow>
                {layers.map(([c, m, label]) => (
                  <LayerRow key={c}>
                    <Cell /><Cell><SmallBulb /></Cell><Cell><SmallLock /></Cell><Cell><Swatch $c={c} /></Cell>
                    <Cell $start><Material $c={m} />{label && <Text w={50}>{label}</Text>}</Cell>
                  </LayerRow>
                ))}
                <ScrollThumb />
              </Table>
            </LayersContent>
            <SideTabs>
              <SideActive><Icon size={22}><LayersDrawing /></Icon></SideActive>
              <SideRest>
                <Icon size={24}><ColorWheel r={8} w={4} /></Icon>
                <svg width="18" height="18"><rect x=".5" y=".5" width="17" height="13" fill="#c4c4c4" stroke="#eee" /><path d="M0 14h18v1h-6v2H6v-2H0z" fill="#111" /></svg>
                <svg width="18" height="26"><rect y="4" width="18" height="17" fill="#fff" /><rect x="1" y="7" width="16" height="13" fill="#3454cf" /><text x="9" y="19" textAnchor="middle" fontFamily="Liberation Serif, serif" fontWeight="700" fontSize="14" fill="#fff">?</text></svg>
              </SideRest>
            </SideTabs>
          </LayersBody>
        </RightColumn>
      </Main>
      <StatusBar>
        <svg width="18" height="18"><rect x="1" y="1" width="16" height="16" fill="none" stroke="#cfcfcf" strokeWidth="2" /><rect width="7" height="18" fill="#cfcfcf" /></svg>
        <Text w={46} $ml={25}>CPlane</Text>
        <Text w={69} $ml={42}>x -166.920</Text>
        <Text w={68} $ml={38}>y -307.881</Text>
        <Text w={19} $ml={64}>z 0</Text>
        <Text w={46} $ml={81}>Meters</Text>
        <ColorBox />
        <Text w={48} $ml={8}>Default</Text>
        <Pill $w={88} $ml={160}><Text w={69} $bold>Grid Snap</Text></Pill>
        <Pill $w={60} $ml={3}><Text w={42} $bold>Ortho</Text></Pill>
        <Text w={41} $ml={15}>Planar</Text>
        <Pill $w={63} $ml={14}><Text w={45} $bold>Osnap</Text></Pill>
        <Pill $w={98} $ml={4}><Text w={80} $bold>SmartTrack</Text></Pill>
        <Pill $w={141} $ml={4}><Text w={122} $bold>Gumball (CPlane)</Text></Pill>
        <Spacer $w={11} />
        <svg width="12" height="17" fill="none"><path d="M3 7V4c0-4 6-4 6 0v3" stroke="#999" strokeWidth="1.500" /><rect x=".5" y="6" width="11" height="10" fill="#ececec" /></svg>
        <Text w={135} $ml={13}>Auto CPlane (World)</Text>
        <Text w={98} $ml={32}>Record History</Text>
        <Text w={33} $ml={27}>Filter</Text>
        <Text w={106} $ml={27}>CPU use: 43.7 %</Text>
        <Spacer $w={61} />
        <svg width="18" height="18"><rect x="1" y="1" width="16" height="16" fill="none" stroke="#cfcfcf" strokeWidth="2" /><rect x="11" width="7" height="18" fill="#cfcfcf" /></svg>
      </StatusBar>
      <Taskbar>
        <Start><svg width="21" height="21"><path d="M0 3l9-1.300V10H0zM10 1.500 21 0v10H10zM0 11h9v8.300L0 18zM10 11h11v10l-11-1.500z" fill="#fff" /></svg></Start>
        <TaskSearch>
          <svg width="22" height="22" fill="none" stroke="#fff" strokeWidth="1.500"><circle cx="13.500" cy="8" r="6.500" /><path d="M9 13 1 21" /></svg>
          <Text w={164} $ml={14} $size={18}>Type here to search</Text>
          <Spacer $w={48} />
          <svg width="100" height="50" viewBox="0 0 100 50" fill="none">
            <path d="M0 50 68 22l32 14v14z" fill="#7fc26a" /><path d="M0 50l30-12 20 12z" fill="#c2d84e" /><path d="M24 40l22 10M50 32l34 18M68 24l30 15M75 43l8 7" stroke="#e6f5d8" strokeWidth="1.500" />
            <path d="M16 5l6 12 14-3-9 11 6 12-13-5-9 9 1-14L1 21l13-4z" fill="#4f9bd8" /><path d="M16 5l4 14-19 2 13-4zM1 21l19-2-8 9z" fill="#e04860" /><path d="M22 17l-2 4 2 8-10-1 8-7z" fill="#bfe1f5" opacity=".7" />
            <path d="M46 47C39 33 49 7 72 8c6 14-2 37-26 39z" fill="#8a4420" stroke="#4d2210" /><path d="M51 28C54 18 62 11 70 10c2 10-2 18-6 23z" fill="#b36332" opacity=".65" /><path d="M66 14 51 36M61 13l7 5M58 17l8 6M55 21l8 6M52 25l8 6M50 30l6 5" stroke="#fff" strokeWidth="2" />
            <path d="M80 9v19h12V24M92 7v21M88 27v16M80 28l8-6" stroke="#f0bf1c" strokeWidth="2.200" />
          </svg>
        </TaskSearch>
        <TaskApp $w={60}><svg width="22" height="22" fill="none" stroke="#fff" strokeWidth="1.500"><path d="M1 5h13v11H1zM1 0v3h13V0M1 22v-3h13v3M18.500 0v3M18.500 10v12M17 7h3" /></svg></TaskApp>
        <TaskApp $ml={9} $open>
          <svg width="31" height="31" viewBox="-16 -16 32 32"><circle r="15" fill="#fbc116" /><path d="M0 0-13-7.500A15 15 0 0 1 13-7.500H0z" fill="#ea4335" /><path d="M-13-7.500A15 15 0 0 0 0 15L6.500 3.500-6.500 3.500z" fill="#34a853" /><circle r="7.500" fill="#fff" /><circle r="5.800" fill="#4285f4" /></svg>
        </TaskApp>
        <TaskApp $ml={11} $open>
          <svg width="32" height="32" viewBox="0 0 32 32"><circle cx="15" cy="15" r="14" fill="#2fa4dc" /><path d="M6 15 23 8l-3 15-6-4-3 3v-5z" fill="#fff" /><rect x="13" y="19" width="18" height="12" rx="3" fill="#7d868c" /><text x="22" y="29" textAnchor="middle" fontFamily="Open Sans, sans-serif" fontSize="10" fill="#fff">..00</text></svg>
        </TaskApp>
        <TaskApp $ml={10}>
          <svg width="31" height="31" viewBox="0 0 32 32"><circle cx="16" cy="16" r="15" fill="#1379c8" /><path d="M2 12C6-3 29-3 31 13c1 8-7 9-12 7 4-6 0-10-6-10-5 0-9 2-11 2z" fill="#38c6b4" /><path d="M31 13c1 8-7 9-12 7 4-4 2-8-1-9 4-7 11-6 13 2z" fill="#63d65a" /><path d="M11 16c-2 9 7 15 16 10-5 8-19 7-23-3-1-8 3-12 9-13-2 1-2 4-2 6z" fill="#0c4f9e" /></svg>
        </TaskApp>
        <TaskApp $ml={12} $open>
          <svg width="29" height="28" viewBox="0 0 29 28"><path d="M1 3h12l2 3h-14z" fill="#d99a1b" /><rect x="1" y="5" width="27" height="20" rx="1" fill="#ffd667" /><path d="M5 27V16c0-2 1-3 3-3h13c2 0 3 1 3 3v11h-5v-8h-9v8z" fill="#3c92d2" /></svg>
        </TaskApp>
        <TaskApp $ml={6} $w={61} $open $active><RhinoHead size={30} /></TaskApp>
        <TaskApp $ml={6} $open>
          <svg width="28" height="30" viewBox="0 0 28 28"><path d="M1 3 15 0l12 2 1 23-14 3L0 26z" fill="#c8ef2a" /><path d="M1 3l9-2-4 10-6 3z" fill="#21d789" /><rect x="4" y="4" width="20" height="20" fill="#000" /><text x="13" y="15" textAnchor="middle" fontFamily="Open Sans, sans-serif" fontWeight="700" fontSize="10.500" fill="#fff">PC</text><rect x="6.500" y="19" width="7" height="1.500" fill="#fff" /></svg>
        </TaskApp>
        <TaskApp $ml={11} $open>
          <svg width="28" height="29" viewBox="0 0 28 29"><path d="M3 1h22l-1 22 3 5H1l2-5z" fill="#cfe5f7" stroke="#4a7ca8" /><path d="M3 1h22v3H3z" fill="#6fa5cf" /><text x="9" y="17" textAnchor="middle" fontFamily="Liberation Serif, serif" fontWeight="700" fontSize="16" fill="#ef8330">A</text><path d="M15 9h7M15 12h7M15 15h7M6 19h16M6 22h13" stroke="#5d89b5" /></svg>
        </TaskApp>
        <TaskApp $ml={11} $open>
          <svg width="32" height="32" viewBox="-16 -16 32 32"><g transform="rotate(45)"><rect x="-10.500" y="-10.500" width="10" height="10" fill="#f0736a" /><rect x=".5" y="-10.500" width="10" height="10" fill="#7fc05c" /><rect x=".5" y=".5" width="10" height="10" fill="#f5dc6e" /><rect x="-10.500" y=".5" width="10" height="10" fill="#76a8f2" /></g><path d="M-4-9 0-4v10M0-3l6 5" stroke="#2a1713" strokeWidth="2" /><circle cy="-3" r="2.500" fill="#2a1713" /><circle cy="7" r="2.500" fill="#2a1713" /><circle cx="6" cy="1" r="2.500" fill="#2a1713" /></svg>
        </TaskApp>
        <TaskApp $ml={355} $w={34}>
          <svg width="32" height="32" viewBox="0 0 32 32"><path d="M6 17c3 9 12 8 16 4 2 7-14 14-19 3z" fill="#f59a23" /><path d="M6 17c3 9 12 8 16 4-2 12-22 10-18-3z" fill="#f8a832" /><path d="M3 13c-4-1-3-6 1-6 1-7 10-7 11 0 5 0 4 6 0 6z" fill="#b9d3f5" /><path d="M17 29c-4-1-3-6 1-6 1-6 9-6 10 0 5 0 4 6 0 6z" fill="#c3d8f5" /><circle cx="23" cy="9" r="8.500" fill="#c92b22" /><text x="23" y="13.500" textAnchor="middle" fontFamily="Open Sans, sans-serif" fontSize="12.500" fill="#fff">1</text></svg>
        </TaskApp>
        <Tray />
      </Taskbar>
    </Window>
  );
}

const TrayRow = styled.div` display: flex; align-items: center; flex: 1; padding-top: 1px; `;
const Edge = styled.i` width: 1px; height: 50px; background: #6a6e70; margin-left: auto; margin-right: 4px; `;

function Tray() {
  return (
    <TrayRow>
      <Text w={38} $ml={7} $size={17.500}>36°C</Text>
      <Text w={102} $ml={10} $size={17.500}>Partly cloudy</Text>
      <Spacer $w={32} />
      <svg width="16" height="10" fill="none" stroke="#fff" strokeWidth="1.500"><path d="M1 9l7-7 7 7" /></svg>
      <Spacer $w={16} />
      <svg width="16" height="20" fill="none" stroke="#fff" strokeWidth="1.300"><rect x="1" y="5" width="9" height="10" rx="2" /><path d="M10 9l4-3v8l-4-3M3 3c3-3 7-2 8 0M3 17c3 3 7 2 8 0" /></svg>
      <Spacer $w={10} />
      <svg width="22" height="22"><path d="M4 13c-5-1-4-6 0-7 2-6 10-5 11 0 5 1 4 7 0 7z" fill="#a9a9a9" /><path d="M1 12c0-4 4-6 8-6l5 3-3 6H3z" fill="#eee" /><circle cx="14" cy="14" r="6.500" fill="#41b8f0" /><path d="M14 13v5M14 10v1.500" stroke="#fff" strokeWidth="2" /></svg>
      <Spacer $w={9} />
      <svg width="19" height="12" fill="none"><rect x=".7" y=".7" width="16" height="10" stroke="#fff" strokeWidth="1.400" /><rect x="2.500" y="2.500" width="3.500" height="6.500" fill="#fff" /><path d="M18 4v4" stroke="#fff" strokeWidth="1.500" /></svg>
      <Spacer $w={13} />
      <svg width="16" height="16" fill="none" strokeWidth="1.300"><path d="M1 14C1 7 7 1 14 1" stroke="#888" /><path d="M5 14c0-5 4-9 9-9M8.500 14c0-3 2.500-5.500 5.500-5.500" stroke="#fff" /><circle cx="13" cy="13" r="1.500" fill="#fff" /></svg>
      <Spacer $w={9} />
      <svg width="21" height="18" fill="none" stroke="#fff" strokeWidth="1.300"><path d="M1 6h3l4-4v14l-4-4H1zM11 6c1.500 2 1.500 4 0 6M14 4c2.500 3 2.500 7 0 10M17 2c3.500 4 3.500 10 0 14" /></svg>
      <Text w={29} $ml={14} $size={14.500}>ENG</Text>
      <Clock><Text w={52} $size={14}>8:22 PM</Text><Text w={60} $size={14}>8/7/2025</Text></Clock>
      <Spacer $w={26} />
      <svg width="22" height="22"><path d="M0 1h20v14l-5 0-6 6v-4H0z" fill="#fff" /><path d="M4 5h12M4 8.500h12M4 12h8" stroke="#262b2d" strokeWidth="1.500" /><circle cx="16" cy="15" r="5.500" fill="#262b2d" /><path d="M18 11c1 3-1 6-5 5 1 4 8 4 8-1 0-2-1-3-3-4z" fill="#ddd" /></svg>
      <Edge />
    </TrayRow>
  );
}
